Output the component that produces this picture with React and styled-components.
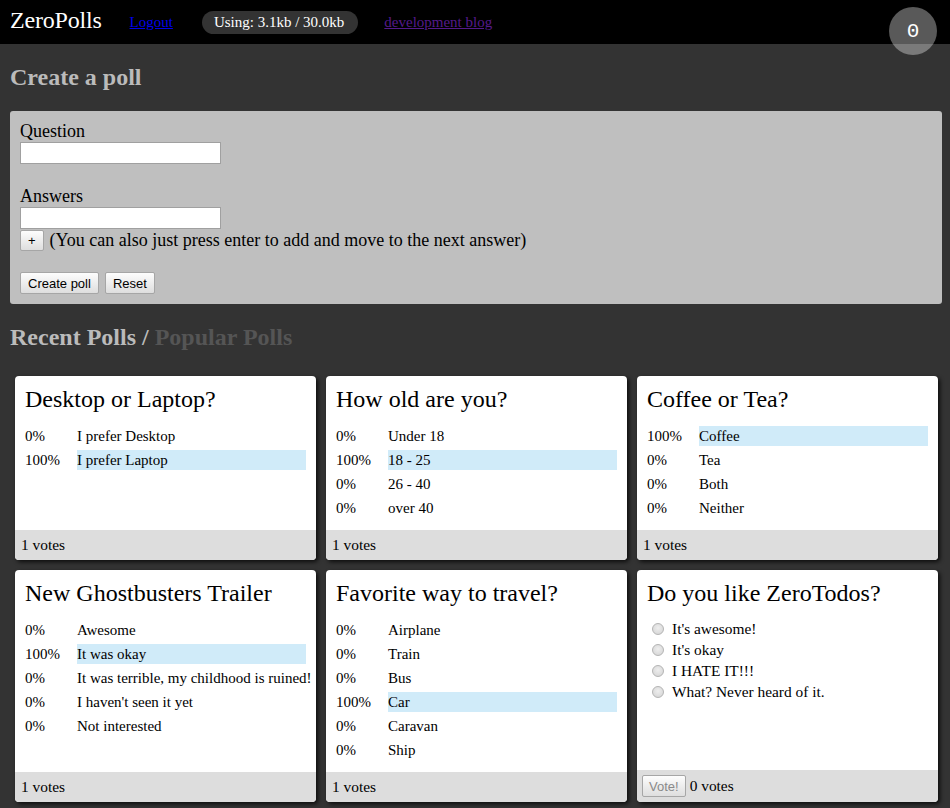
import React from 'react';
import styled, { createGlobalStyle } from 'styled-components';

const GlobalStyle = createGlobalStyle`
  html, body {
    margin: 0;
    padding: 0;
    background: #333333;
    font-family: "Liberation Serif", "Times New Roman", serif;
  }
`;

const polls = [
  {
    title: 'Desktop or Laptop?',
    votes: 1,
    answers: [
      { pct: 0, text: 'I prefer Desktop' },
      { pct: 100, text: 'I prefer Laptop' },
    ],
  },
  {
    title: 'How old are you?',
    votes: 1,
    answers: [
      { pct: 0, text: 'Under 18' },
      { pct: 100, text: '18 - 25' },
      { pct: 0, text: '26 - 40' },
      { pct: 0, text: 'over 40' },
    ],
  },
  {
    title: 'Coffee or Tea?',
    votes: 1,
    answers: [
      { pct: 100, text: 'Coffee' },
      { pct: 0, text: 'Tea' },
      { pct: 0, text: 'Both' },
      { pct: 0, text: 'Neither' },
    ],
  },
  {
    title: 'New Ghostbusters Trailer',
    votes: 1,
    answers: [
      { pct: 0, text: 'Awesome' },
      { pct: 100, text: 'It was okay' },
      { pct: 0, text: 'It was terrible, my childhood is ruined!' },
      { pct: 0, text: "I haven't seen it yet" },
      { pct: 0, text: 'Not interested' },
    ],
  },
  {
    title: 'Favorite way to travel?',
    votes: 1,
    answers: [
      { pct: 0, text: 'Airplane' },
      { pct: 0, text: 'Train' },
      { pct: 0, text: 'Bus' },
      { pct: 100, text: 'Car' },
      { pct: 0, text: 'Caravan' },
      { pct: 0, text: 'Ship' },
    ],
  },
];

const Header = styled.div`
  position: relative;
  height: 44px;
  background: #000000;
  display: flex;
  align-items: center;
  padding: 0 10px;
`;

const Logo = styled.span`
  color: #ffffff;
  font-size: 24px;
  letter-spacing: -0.2px;
  margin-top: -3px;
  margin-right: 28px;
`;

const NavLink = styled.a`
  font-size: 15px;
  color: ${(p) => (p.visited ? '#551a8b' : '#0000ee')};
  text-decoration: underline;
  margin-right: ${(p) => p.gap || 0}px;
`;

const Usage = styled.span`
  background: #333333;
  color: #ffffff;
  font-size: 15px;
  border-radius: 12px;
  height: 23px;
  line-height: 23px;
  padding: 0 14px 0 12px;
  margin-right: 26px;
`;

const Counter = styled.div`
  position: absolute;
  top: 7px;
  right: 13px;
  width: 48px;
  height: 48px;
  border-radius: 50%;
  background: rgba(255, 255, 255, 0.35);
  color: #ffffff;
  font-family: "Liberation Mono", "DejaVu Sans Mono", monospace;
  font-size: 21px;
  display: flex;
  align-items: center;
  justify-content: center;
`;

const Main = styled.div`
  padding: 0 8px 20px 10px;
`;

const Heading = styled.h2`
  margin: 20px 0;
  font-size: 24px;
  font-weight: bold;
  line-height: 27px;
  color: #bbbbbb;
`;

const Muted = styled.span`
  color: #555555;
`;

const FormPanel = styled.div`
  background: #bfbfbf;
  border-radius: 3px;
  padding: 10px;
  font-size: 18px;
  color: #000000;
`;

const Field = styled.div`
  margin-bottom: ${(p) => p.spacing || 0}px;
`;

const Label = styled.div`
  height: 21px;
  line-height: 21px;
`;

const TextInput = styled.input`
  display: block;
  box-sizing: border-box;
  width: 201px;
  height: 22px;
  border: 1px solid #a0a0a0;
  background: #ffffff;
  margin: 0;
  padding: 1px 3px;
`;

const AddRow = styled.div`
  display: flex;
  align-items: center;
  gap: 6px;
  height: 22px;
  line-height: 22px;
`;

const Button = styled.button`
  font-family: "Liberation Sans", Arial, sans-serif;
  font-size: 13px;
  height: ${(p) => p.h || 22}px;
  padding: 0 ${(p) => p.px || 7}px;
  border: 1px solid #a6a6a6;
  border-radius: 2px;
  background: linear-gradient(#fdfdfd, #dedede);
  color: ${(p) => (p.disabled ? '#8a8a8a' : '#000000')};
  margin: 0;
`;

const ButtonRow = styled.div`
  display: flex;
  gap: 6px;
`;

const Grid = styled.div`
  display: grid;
  grid-template-columns: repeat(3, minmax(0, 1fr));
  gap: 10px;
  padding: 5px;
  width: 923px;
`;

const Card = styled.div`
  background: #ffffff;
  border-radius: 4px;
  box-shadow: 2px 2px 4px rgba(0, 0, 0, 0.75);
  display: flex;
  flex-direction: column;
  min-width: 0;
  color: #000000;
`;

const CardBody = styled.div`
  flex: 1;
  padding: 10px;
`;

const CardTitle = styled.h3`
  margin: 0 0 11px;
  font-size: 24px;
  font-weight: normal;
  line-height: 27px;
`;

const AnswerRow = styled.div`
  display: flex;
  padding: 2px 0;
  font-size: 15px;
  line-height: 20px;
  white-space: nowrap;
`;

const Pct = styled.span`
  width: 52px;
  flex: none;
`;

const AnswerText = styled.span`
  flex: 1;
  min-width: 0;
  background: ${(p) => (p.top ? '#d0ebf9' : 'transparent')};
`;

const RadioList = styled.div`
  font-size: 15.4px;
`;

const RadioRow = styled.label`
  display: flex;
  align-items: center;
  height: 21px;
  line-height: 21px;
`;

const Radio = styled.input`
  appearance: none;
  box-sizing: border-box;
  margin: 0 8px 0 5px;
  width: 12px;
  height: 12px;
  border-radius: 50%;
  border: 1px solid #b4b4b4;
  background: radial-gradient(circle at 50% 40%, #eeeeee, #d2d2d2);
`;

const Footer = styled.div`
  background: #dddddd;
  border-radius: 0 0 4px 4px;
  padding: 5px 6px;
  font-size: 15.4px;
  line-height: 20px;
  display: flex;
  align-items: center;
  gap: 4px;
  padding-left: ${(p) => (p.withButton ? 5 : 6)}px;
`;

const PollCard = ({ poll }) => (
  <Card>
    <CardBody>
      <CardTitle>{poll.title}</CardTitle>
      {poll.answers.map((a) => (
        <AnswerRow key={a.text}>
          <Pct>{a.pct}%</Pct>
          <AnswerText top={a.pct === 100}>{a.text}</AnswerText>
        </AnswerRow>
      ))}
    </CardBody>
    <Footer>{poll.votes} votes</Footer>
  </Card>
);

const VoteCard = () => (
  <Card>
    <CardBody>
      <CardTitle>Do you like ZeroTodos?</CardTitle>
      <RadioList>
        {["It's awesome!", "It's okay", 'I HATE IT!!!', 'What? Never heard of it.'].map((t) => (
          <RadioRow key={t}>
            <Radio type="radio" name="zerotodos" />
            {t}
          </RadioRow>
        ))}
      </RadioList>
    </CardBody>
    <Footer withButton>
      <Button disabled h={22} px={6}>Vote!</Button>
      0 votes
    </Footer>
  </Card>
);

export default function App() {
  return (
    <>
      <GlobalStyle />
      <Header>
        <Logo>ZeroPolls</Logo>
        <NavLink href="#" gap={29}>Logout</NavLink>
        <Usage>Using: 3.1kb / 30.0kb</Usage>
        <NavLink href="#" visited>development blog</NavLink>
        <Counter>0</Counter>
      </Header>
      <Main>
        <Heading>Create a poll</Heading>
        <FormPanel>
          <Field spacing={22}>
            <Label>Question</Label>
            <TextInput type="text" />
          </Field>
          <Field spacing={21}>
            <Label>Answers</Label>
            <TextInput type="text" />
            <AddRow>
              <Button h={21} px={7}>+</Button>
              <span>(You can also just press enter to add and move to the next answer)</span>
            </AddRow>
          </Field>
          <ButtonRow>
            <Button>Create poll</Button>
            <Button>Reset</Button>
          </ButtonRow>
        </FormPanel>
        <Heading>
          Recent Polls / <Muted>Popular Polls</Muted>
        </Heading>
        <Grid>
          {polls.slice(0, 5).map((p) => (
            <PollCard key={p.title} poll={p} />
          ))}
          <VoteCard />
        </Grid>
      </Main>
    </>
  );
}
